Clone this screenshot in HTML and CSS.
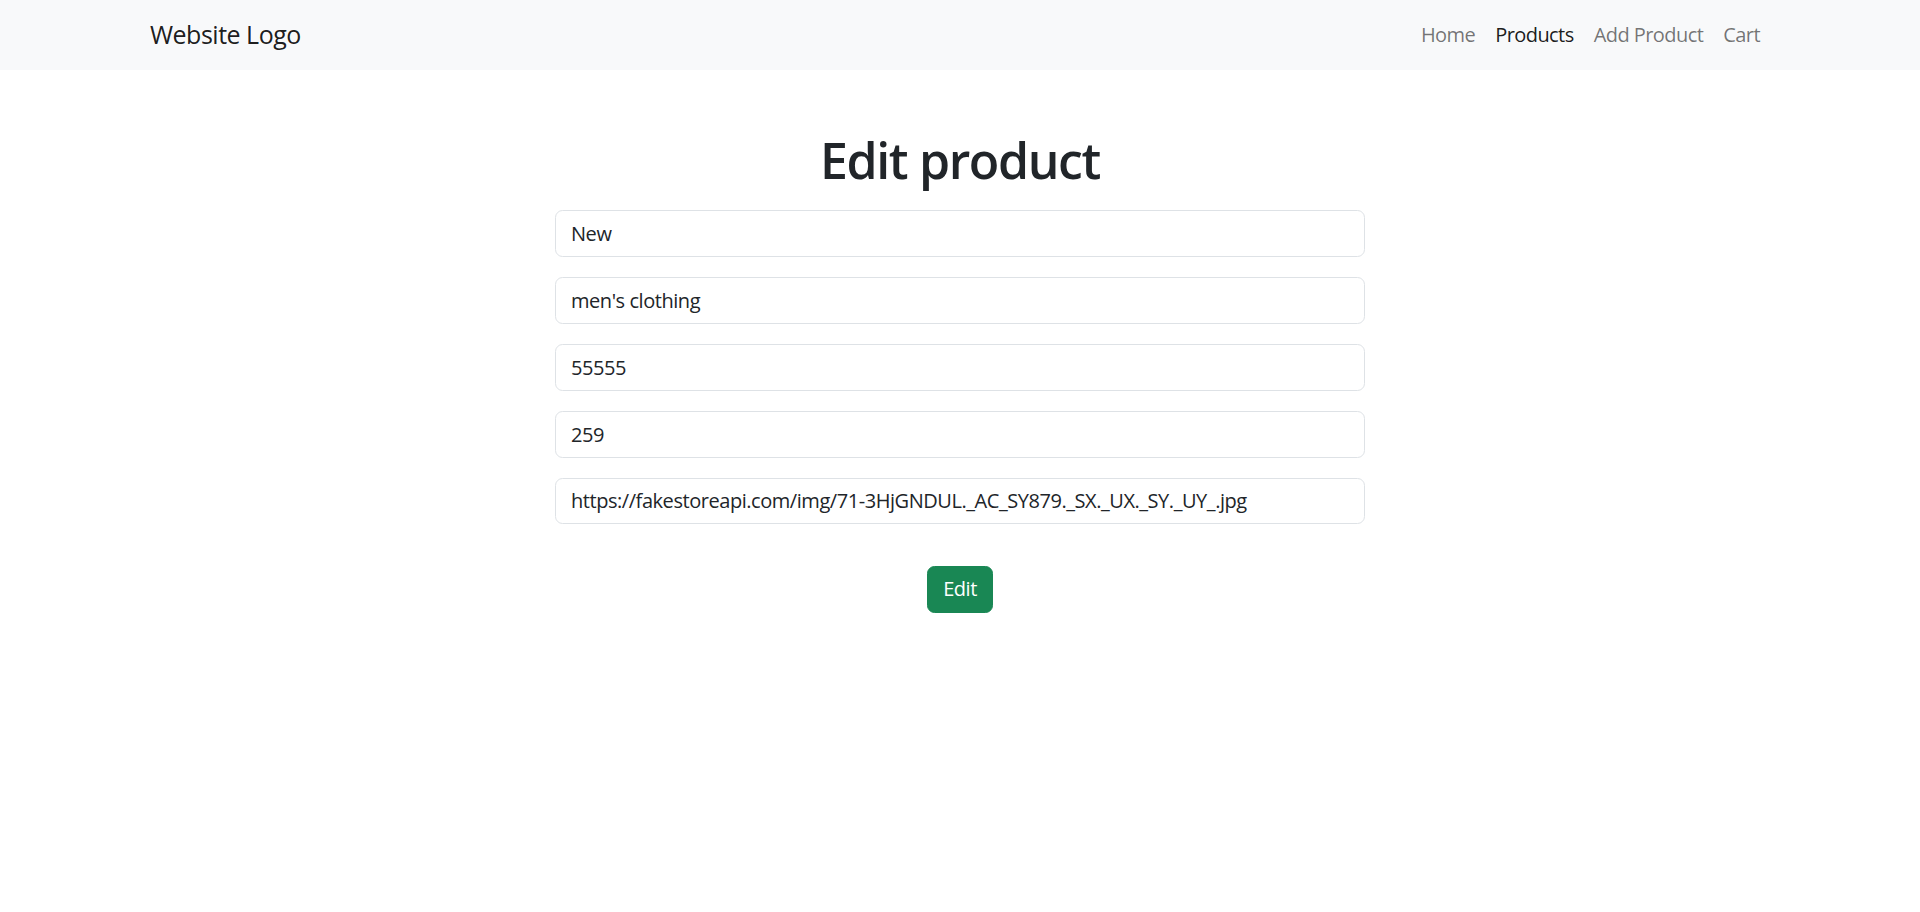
FILE: index.html
```html
<!DOCTYPE html>
<html lang="en">
<head>
<meta charset="utf-8">
<title>Edit product</title>
<link rel="stylesheet" href="styles.css">
</head>
<body>
<nav class="navbar">
  <div class="container nav-inner">
    <a class="brand" href="#">Website Logo</a>
    <ul class="nav-links">
      <li><a class="nav-link" href="#">Home</a></li>
      <li><a class="nav-link active" href="#">Products</a></li>
      <li><a class="nav-link" href="#">Add Product</a></li>
      <li><a class="nav-link" href="#">Cart</a></li>
    </ul>
  </div>
</nav>
<main class="container page">
  <h1 class="title">Edit product</h1>
  <form class="form">
    <input class="field" type="text" value="New">
    <input class="field" type="text" value="men's clothing">
    <input class="field" type="text" value="55555">
    <input class="field" type="text" value="259">
    <input class="field" type="text" value="https://fakestoreapi.com/img/71-3HjGNDUL._AC_SY879._SX._UX._SY._UY_.jpg">
    <div class="actions">
      <button class="btn-success" type="button">Edit</button>
    </div>
  </form>
</main>
</body>
</html>
```
FILE: styles.css
```css
html {
  zoom: 1.25;
}
* {
  box-sizing: border-box;
}
body {
  margin: 0;
  font-family: "Open Sans", "Noto Sans", sans-serif;
  font-size: 16px;
  line-height: 1.5;
  letter-spacing: -0.36px;
  color: #212529;
  background: #fff;
}
.container {
  max-width: 1320px;
  margin: 0 auto;
  padding: 0 12px;
}
.navbar {
  background: #f8f9fa;
  padding: 8px 0;
}
.nav-inner {
  display: flex;
  align-items: center;
  justify-content: space-between;
}
.brand {
  font-size: 20px;
  line-height: 30px;
  padding: 5px 0;
  letter-spacing: -0.4px;
  color: rgba(0, 0, 0, 0.9);
  text-decoration: none;
}
.nav-links {
  display: flex;
  list-style: none;
  margin: 0;
  padding: 0;
}
.nav-link {
  display: block;
  padding: 8px;
  line-height: 24px;
  letter-spacing: -0.45px;
  color: rgba(0, 0, 0, 0.55);
  text-decoration: none;
}
.nav-link.active {
  color: rgba(0, 0, 0, 0.9);
}
.page {
  padding-top: 48px;
}
.title {
  margin: 0 0 16px;
  font-size: 40px;
  line-height: 48px;
  font-weight: 600;
  letter-spacing: -1.1px;
  text-align: center;
}
.form {
  width: 648px;
  margin: 0 auto;
  display: flex;
  flex-direction: column;
  gap: 16px;
}
.field {
  display: block;
  width: 100%;
  height: 37.5px;
  padding: 6px 12px;
  font-family: inherit;
  font-size: 16px;
  line-height: 24px;
  letter-spacing: -0.36px;
  color: #212529;
  background: #fff;
  border: 1px solid #dee2e6;
  border-radius: 6px;
  outline: none;
}
.actions {
  display: flex;
  justify-content: center;
  margin-top: 17px;
}
.btn-success {
  height: 38px;
  padding: 6px 12px;
  font-family: inherit;
  font-size: 16px;
  line-height: 24px;
  letter-spacing: -0.36px;
  color: #fff;
  background: #198754;
  border: 1px solid #198754;
  border-radius: 6px;
  cursor: pointer;
}
```
